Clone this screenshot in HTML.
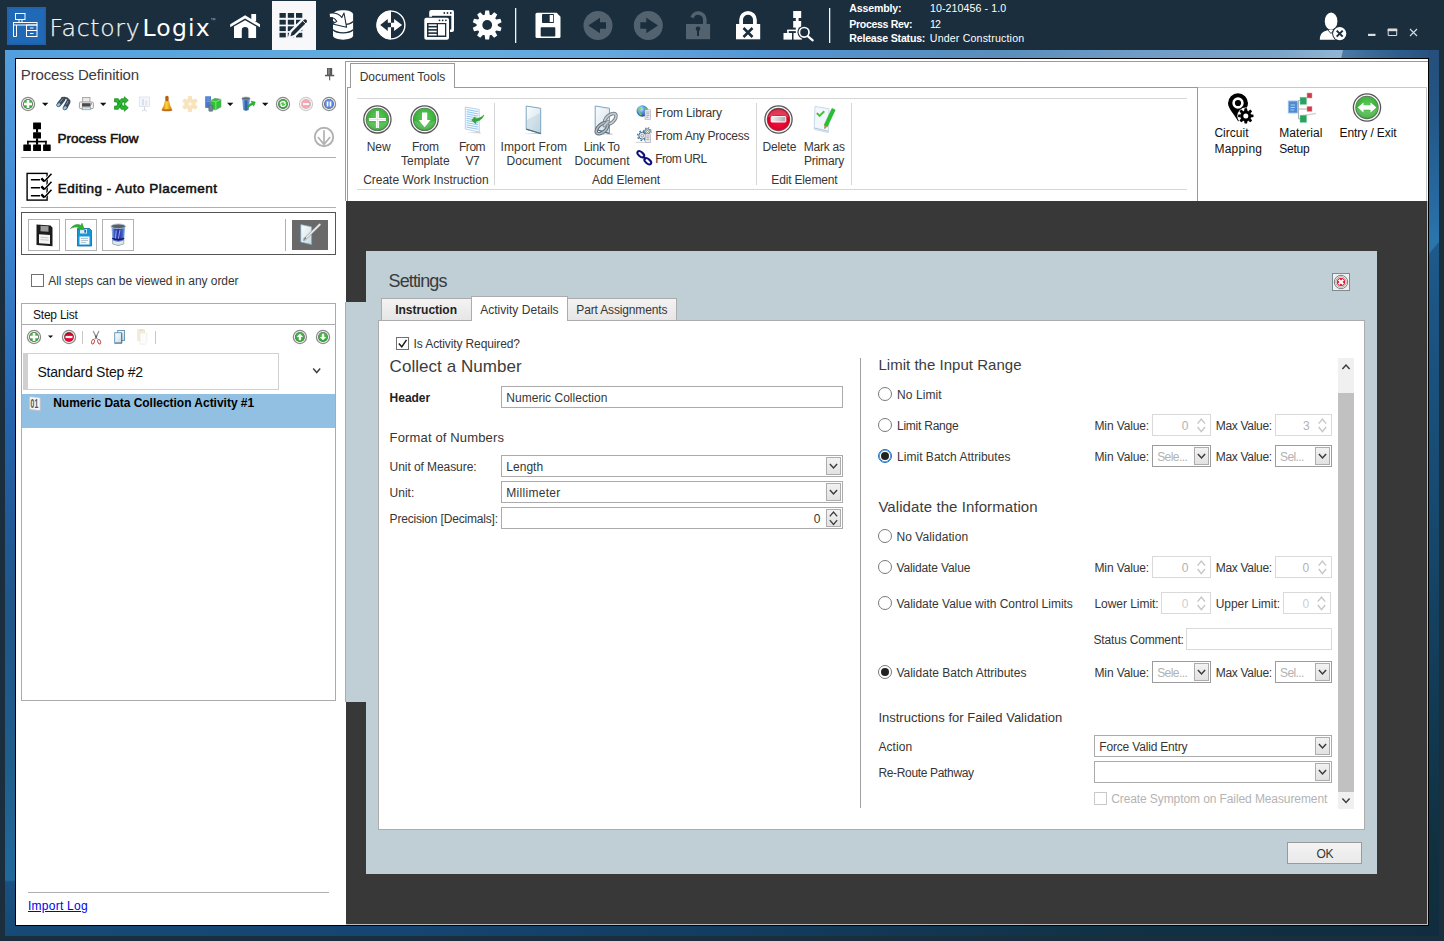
<!DOCTYPE html>
<html lang="en"><head><meta charset="utf-8"><title>FactoryLogix - Process Definition</title>
<style>
html,body{margin:0;padding:0;background:#1a2e3d;}
body{width:1444px;height:941px;overflow:hidden;font-family:"Liberation Sans",sans-serif;font-size:12px;color:#333;}
#app{position:relative;width:1444px;height:941px;overflow:hidden;background:#1a2e3d;}
#app div,#app svg,#app span{position:absolute;box-sizing:border-box;}
.t{line-height:0;white-space:nowrap;color:#363636;}
/* wallpaper strips visible around the panels */
#wl{left:5px;top:50px;width:11px;height:886px;background:linear-gradient(180deg,#549fde 0,#4791d9 110px,#408ad6 160px,#2f73bd 280px,#2565ae 360px,#215a97 470px,#205688 560px,#1f5c8b 680px,#1f5f8c 720px,#21699b 830px,#1a5082 832px,#164a76 886px);}
#wr{left:1428px;top:50px;width:11px;height:886px;background:linear-gradient(180deg,#264f7c 0,#235585 60px,#2769a0 150px,#2b75ad 191px,#1e5a8b 193px,#1b5280 300px,#174a70 450px,#133c58 620px,#10303f 800px,#0f2d3e 886px);}
#wr2{left:1428px;top:241px;width:11px;height:14px;background:#2b74ac;clip-path:polygon(0 0,100% 0,100% 1px,0 100%);}
#wt{left:5px;top:50px;width:1434px;height:9px;background:linear-gradient(90deg,#539fde 0,#5aa4de 150px,#66aedf 420px,#65a8de 600px,#5296d4 760px,#5690c6 880px,#5a8ebb 1000px,#6f9cc6 1130px,#7ba5ca 1275px,#92b6d4 1337px);}
#wt2{left:1341px;top:50px;width:98px;height:9px;background:linear-gradient(90deg,#4c7ca6 0,#3a6a96 30px,#2e5c8a 60px,#264f7c 98px);clip-path:polygon(2px 0,100% 0,100% 100%,0 100%);}
#wb{left:5px;top:925px;width:1434px;height:11px;background:linear-gradient(90deg,#164a76 0,#154572 400px,#123a5a 800px,#103245 1100px,#0f2d3e 1434px);}
#shell{left:15px;top:58px;width:1414px;height:868px;background:#fff;border:1px solid #000;}
/* title bar */
#logo{left:7px;top:7px;width:39px;height:38px;background:#1f69b7;border:2px solid #2262ab;}
#seltab{left:272px;top:1px;width:44px;height:49px;background:#f8f8fa;}
.vsep{width:1px;background:#f4f5f6;box-shadow:1px 0 0 rgba(255,255,255,.28);}
/* generic */
.ln{background:#b0b0b0;height:1px;}
.vl{background:#b0b0b0;width:1px;}
.bx{border:1px solid #ababab;background:#fff;}
.btn15{width:15px;height:18px;border:1px solid #adadad;background:linear-gradient(#f2f2f2,#e2e2e2);}
.cb{width:13px;height:13px;border:1px solid #707070;background:#fff;}
.rd{width:14px;height:14px;border:1px solid #7a7a7a;border-radius:50%;background:#fff;}
.rd.blue{border-color:#1c6fc4;box-shadow:inset 0 0 0 0.6px #1c6fc4;}
.rd.on::after{content:"";position:absolute;left:2px;top:2px;width:8px;height:8px;border-radius:50%;background:#222;}
.dis{border-color:#d9d9d9;}
.cmb{border:1px solid #9c9c9c;background:#fff;}
.ibtn{width:32px;height:32px;border:1px solid #b2b2b2;background:#fff;}

</style></head>
<body>
<div id="app">
<div id="wt"></div><div id="wt2"></div><div id="wb"></div><div id="wl"></div><div id="wr"></div><div id="wr2"></div>
<div id="shell"></div>
<!-- ===== title bar ===== -->
<div id="logo"></div>
<div id="seltab"></div>
<div class="vsep" style="left:515px;top:8px;height:35px"></div>
<div class="vsep" style="left:829px;top:8px;height:35px"></div>

<!-- ===== left panel ===== -->
<div class="ln" style="left:21px;top:157px;width:315px"></div>
<div class="ln" style="left:21px;top:207px;width:315px"></div>
<div style="left:21px;top:212px;width:315px;height:43px;border:1px solid #555;background:#fff"></div>
<div class="ibtn" style="left:28px;top:219px"></div>
<div class="ibtn" style="left:65px;top:219px"></div>
<div class="ibtn" style="left:102px;top:219px"></div>
<div class="vl" style="left:285px;top:219px;height:32px"></div>
<div style="left:292px;top:220px;width:36px;height:30px;background:#696969"></div>
<div class="cb" style="left:31px;top:274px"></div>
<!-- step list -->
<div style="left:21px;top:303px;width:315px;height:398px;border:1px solid #ababab;background:#fff"></div>
<div class="ln" style="left:21px;top:324px;width:315px;background:#ababab"></div>
<div class="vl" style="left:82px;top:331px;height:13px;background:#c8c8c8"></div>
<div class="vl" style="left:155px;top:331px;height:13px;background:#c8c8c8"></div>
<div style="left:23px;top:353px;width:256px;height:37px;border:1px solid #d0d0d0;background:#fff;border-left:5px solid #d0d0d0"></div>
<div style="left:22px;top:394px;width:313px;height:34px;background:#92c0e2"></div>
<div class="ln" style="left:28px;top:892px;width:301px"></div>

<!-- ===== right panel / ribbon ===== -->
<div style="left:345px;top:61px;width:1083px;height:140px;border:1px solid #9a9a9a;border-right:0;border-bottom:0;background:#fff"></div>
<div style="left:347px;top:87px;width:851px;height:114px;border:1px solid #9a9a9a;border-bottom:0;background:#fff"></div>
<div class="ln" style="left:1198px;top:87px;width:229px;background:#c8c8c8"></div>
<div class="vl" style="left:1426px;top:87px;height:114px;background:#c8c8c8"></div>
<div style="left:350px;top:63px;width:105px;height:25px;border:1px solid #9a9a9a;border-bottom:0;background:#fff"></div>
<div class="ln" style="left:357px;top:98px;width:830px;background:#d6d6d6"></div>
<div class="ln" style="left:357px;top:189px;width:830px;background:#d6d6d6"></div>
<div class="vl" style="left:494px;top:103px;height:82px;background:#d6d6d6"></div>
<div class="vl" style="left:756px;top:103px;height:82px;background:#d6d6d6"></div>
<div class="vl" style="left:851px;top:103px;height:82px;background:#d6d6d6"></div>
<!-- dark work area -->
<div style="left:346px;top:201px;width:1082px;height:724px;background:#383838"></div>
<div class="vl" style="left:1427px;top:201px;height:724px;background:#bdbdbd"></div>
<div class="ln" style="left:346px;top:924px;width:1082px;background:#bdbdbd"></div>
<div style="left:345px;top:302px;width:22px;height:400px;background:#c0ced6;border-left:1px solid #a9a9a9"></div>

<!-- ===== settings dialog ===== -->
<div id="dlg" style="left:366px;top:251px;width:1011px;height:623px;background:#c0ced6"></div>
<div style="left:1332px;top:273px;width:18px;height:18px;border:1px solid #7b8a93;background:#f1f1f1"></div>
<!-- tabs -->
<div style="left:381px;top:298px;width:91px;height:23px;border:1px solid #acacac;background:linear-gradient(#f3f3f3,#e6e6e6)"></div>
<div style="left:567px;top:298px;width:110px;height:23px;border:1px solid #acacac;background:linear-gradient(#f3f3f3,#e6e6e6)"></div>
<div style="left:378px;top:320px;width:987px;height:510px;border:1px solid #acacac;background:#fff"></div>
<div style="left:471px;top:296px;width:97px;height:25px;border:1px solid #acacac;border-bottom:0;background:#fff"></div>
<!-- left column -->
<div class="cb" style="left:396px;top:337px"></div>
<div class="bx" style="left:501px;top:386px;width:342px;height:22px"></div>
<div class="bx" style="left:501px;top:455px;width:342px;height:22px"></div>
<div class="btn15" style="left:826px;top:457px"></div>
<div class="bx" style="left:501px;top:481px;width:342px;height:22px"></div>
<div class="btn15" style="left:826px;top:483px"></div>
<div class="bx" style="left:501px;top:507px;width:342px;height:22px"></div>
<div class="btn15" style="left:826px;top:509px"></div>
<div class="vl" style="left:860px;top:358px;height:450px;background:#a0a0a0"></div>
<!-- scrollbar -->
<div style="left:1338px;top:358px;width:16px;height:451px;background:#f0f0f0"></div>
<div style="left:1338px;top:393px;width:16px;height:399px;background:#c1c1c1"></div>
<!-- radios -->
<div class="rd" style="left:878px;top:387px"></div>
<div class="rd" style="left:878px;top:418px"></div>
<div class="rd on blue" style="left:878px;top:449px"></div>
<div class="rd" style="left:878px;top:529px"></div>
<div class="rd" style="left:878px;top:560px"></div>
<div class="rd" style="left:878px;top:596px"></div>
<div class="rd on" style="left:878px;top:665px"></div>
<!-- limit range row -->
<div class="bx dis" style="left:1152px;top:414px;width:59px;height:22px"></div>
<div class="bx dis" style="left:1275px;top:414px;width:57px;height:22px"></div>
<!-- limit batch row -->
<div class="cmb" style="left:1152px;top:445px;width:59px;height:22px"></div>
<div class="btn15" style="left:1194px;top:447px"></div>
<div class="cmb" style="left:1275px;top:445px;width:57px;height:22px"></div>
<div class="btn15" style="left:1315px;top:447px"></div>
<!-- validate value row -->
<div class="bx dis" style="left:1152px;top:556px;width:59px;height:22px"></div>
<div class="bx dis" style="left:1275px;top:556px;width:57px;height:22px"></div>
<!-- control limits row -->
<div class="bx dis" style="left:1161px;top:592px;width:50px;height:22px"></div>
<div class="bx dis" style="left:1283px;top:592px;width:48px;height:22px"></div>
<!-- status comment -->
<div class="bx dis" style="left:1186px;top:628px;width:146px;height:22px"></div>
<!-- validate batch row -->
<div class="cmb" style="left:1152px;top:661px;width:59px;height:22px"></div>
<div class="btn15" style="left:1194px;top:663px"></div>
<div class="cmb" style="left:1275px;top:661px;width:57px;height:22px"></div>
<div class="btn15" style="left:1315px;top:663px"></div>
<!-- action / re-route -->
<div class="bx" style="left:1094px;top:735px;width:238px;height:22px"></div>
<div class="btn15" style="left:1315px;top:737px"></div>
<div class="bx" style="left:1094px;top:761px;width:238px;height:22px"></div>
<div class="btn15" style="left:1315px;top:763px"></div>
<div class="cb" style="left:1094px;top:792px;border-color:#c9c9c9"></div>
<!-- OK -->
<div style="left:1287px;top:842px;width:75px;height:22px;border:1px solid #9a9a9a;background:linear-gradient(#f4f4f4,#e9e9e9)"></div>

<!-- ===== dialog glyphs ===== -->
<svg style="left:366px;top:251px" width="1011" height="623" viewBox="366 251 1011 623">
 <defs>
  <path id="chv" d="M-3.600 -1.900L0 1.900L3.600 -1.900" fill="none" stroke="#3c3c3c" stroke-width="1.500"/>
  <g id="spin"><path d="M-3.700 -1.900L0 -6.200L3.700 -1.900M-3.700 1.900L0 6.200L3.700 1.900" fill="none" stroke="#3c3c3c" stroke-width="1.300"/></g>
  <g id="spind"><path d="M-3.700 -1.700L0 -6.300L3.700 -1.700M-3.700 1.700L0 6.300L3.700 1.700" fill="none" stroke="#c6c6c6" stroke-width="1.400"/></g>
 </defs>
 <!-- close -->
 <g transform="translate(1341 282)"><circle r="6.700" fill="#f4f4f4" stroke="#6f6f6f" stroke-width="0.900"/><circle r="5.200" fill="none" stroke="#8d8d8d" stroke-width="0.700"/><circle r="4.100" fill="#e8102c"/><path d="M-2.300 -2.300L2.300 2.300M2.300 -2.300L-2.300 2.300" stroke="#fff" stroke-width="2.100"/></g>
 <!-- check mark -->
 <path d="M398.800 343.500L401.800 346.800L406.500 339.800" fill="none" stroke="#1a1a1a" stroke-width="1.500"/>
 <!-- combo chevrons left column -->
 <use href="#chv" x="833.500" y="466"/>
 <use href="#chv" x="833.500" y="492"/>
 <use href="#spin" x="833.500" y="518.200"/>
 <!-- scrollbar arrows -->
 <use href="#chv" x="1346" y="367" transform="rotate(180 1346 367)"/>
 <use href="#chv" x="1346" y="800.500"/>
 <!-- disabled spinners -->
 <use href="#spind" x="1201.300" y="425.300"/><use href="#spind" x="1322.400" y="425.300"/>
 <use href="#spind" x="1201.300" y="567.300"/><use href="#spind" x="1322.400" y="567.300"/>
 <use href="#spind" x="1201.300" y="603.300"/><use href="#spind" x="1321.500" y="603.300"/>
 <!-- combo chevrons right column -->
 <use href="#chv" x="1201.500" y="456"/><use href="#chv" x="1322.500" y="456"/>
 <use href="#chv" x="1201.500" y="672"/><use href="#chv" x="1322.500" y="672"/>
 <use href="#chv" x="1322.500" y="746"/><use href="#chv" x="1322.500" y="772"/>
</svg>
<!-- ===== shared defs + left panel icons ===== -->
<svg style="left:0;top:59px" width="346" height="866" viewBox="0 59 346 866">
 <defs>
  <radialGradient id="gGreen" cx="50%" cy="40%" r="68%"><stop offset="0" stop-color="#5ccb58"/><stop offset="0.7" stop-color="#3aae3a"/><stop offset="1" stop-color="#1f8a24"/></radialGradient>
  <radialGradient id="gRed" cx="50%" cy="62%" r="62%"><stop offset="0" stop-color="#f2103c"/><stop offset="0.7" stop-color="#de0029"/><stop offset="1" stop-color="#b4001c"/></radialGradient>
  <radialGradient id="gBlue" cx="50%" cy="40%" r="70%"><stop offset="0" stop-color="#74a0f4"/><stop offset="1" stop-color="#4573dc"/></radialGradient>
  <linearGradient id="gDoc" x1="0" y1="0" x2="1" y2="1"><stop offset="0" stop-color="#fbfdfe"/><stop offset="0.5" stop-color="#e4eef4"/><stop offset="1" stop-color="#c3d7e2"/></linearGradient>
  <linearGradient id="gBell" x1="0" y1="0" x2="1" y2="0"><stop offset="0" stop-color="#c86a00"/><stop offset="0.45" stop-color="#ffd23c"/><stop offset="1" stop-color="#d46f00"/></linearGradient>
  <linearGradient id="gBin2" x1="0" y1="0" x2="1" y2="0"><stop offset="0" stop-color="#b4d4ee"/><stop offset="0.22" stop-color="#3a55c4"/><stop offset="0.55" stop-color="#2230a4"/><stop offset="0.82" stop-color="#4468cc"/><stop offset="1" stop-color="#a9cbe8"/></linearGradient>
  <linearGradient id="gBin" x1="0" y1="0" x2="1" y2="0"><stop offset="0" stop-color="#8fc4e8"/><stop offset="0.5" stop-color="#2a55a8"/><stop offset="1" stop-color="#7fb4dc"/></linearGradient>
  <g id="orb7"><circle r="6.600" fill="#f6f6f6" stroke="#8a8a8a" stroke-width="1.200"/><circle r="5" fill="#707070"/></g>
  <g id="orb14"><circle r="13.600" fill="#fcfcfc" stroke="#555" stroke-width="1.300"/><circle r="11.700" fill="#6a6a6a"/></g>
  <path id="dd" d="M0 0H6.400L3.200 3.300Z" fill="#111"/>
 </defs>
 <!-- pin -->
 <g fill="#595959"><rect x="327" y="68" width="5.200" height="7"/><rect x="328.300" y="68.600" width="1.200" height="6" fill="#9a9a9a"/><rect x="325" y="74.800" width="9.200" height="1.500"/><rect x="329.100" y="76" width="1.100" height="4.300"/></g>
 <!-- toolbar row y=104 -->
 <g transform="translate(28 104)"><use href="#orb7"/><circle r="4.500" fill="url(#gGreen)"/><path d="M-4 0H4M0 -4V4" stroke="#fff" stroke-width="2.500"/></g>
 <use href="#dd" x="42" y="102.800"/>
 <!-- binoculars -->
 <g fill="none" stroke-linecap="round">
  <path d="M59 104.300L63.200 99.200M65.300 107.500L68.200 102" stroke="#3d4a59" stroke-width="4.600"/>
  <path d="M62 98.300Q66.500 96.600 69.300 100.600" stroke="#3d4a59" stroke-width="2"/>
  <path d="M60.500 101.500L62.700 98.900M66.500 104.200L68 101.400" stroke="#8f9cab" stroke-width="0.900"/>
  <ellipse cx="58.700" cy="104.700" rx="2.300" ry="1.700" fill="#86c8f0" stroke="#3d4a59" stroke-width="0.600" transform="rotate(-40 58.700 104.700)"/>
  <ellipse cx="65" cy="107.900" rx="2.300" ry="1.700" fill="#86c8f0" stroke="#3d4a59" stroke-width="0.600" transform="rotate(-40 65 107.900)"/>
 </g>
 <!-- printer -->
 <g>
  <rect x="82.700" y="97.600" width="7.300" height="5" fill="#e9e9e9" stroke="#8c8c8c" stroke-width="0.700"/>
  <rect x="79.400" y="102" width="14" height="6.600" rx="1.200" fill="#f4f4f4" stroke="#8a8a8a" stroke-width="0.800"/>
  <rect x="82" y="103.200" width="8.600" height="3.400" fill="#4a4a4a"/>
  <rect x="82.200" y="107" width="8.400" height="2.800" fill="#cfeaf6" stroke="#8a8a8a" stroke-width="0.600"/>
  <rect x="91" y="103.400" width="1" height="1" fill="#2f5fff"/>
 </g>
 <use href="#dd" x="100" y="102.800"/>
 <!-- green shuffle -->
 <g fill="#27b62e" stroke="#14881b" stroke-width="0.700" stroke-linejoin="round">
  <path d="M114.500 98.700H118.300L123 106.100H124.300V104.100L128.300 107.700L124.300 111.300V109.300H121.300L116.600 101.900H114.500Z"/>
  <path d="M114.500 109.300H118.300L123 101.900H124.300V103.900L128.300 100.300L124.300 96.700V98.700H121.300L116.600 106.100H114.500Z"/>
 </g>
 <!-- presentation (disabled) -->
 <g opacity="0.550">
  <rect x="139.300" y="97" width="10.300" height="9.600" fill="#eaf2fb" stroke="#a9c3e6" stroke-width="0.700"/>
  <rect x="142" y="99" width="2" height="6.500" fill="#b9c8d8"/><rect x="145.200" y="100.500" width="2" height="5" fill="#c9d2dc"/>
  <path d="M144.500 106.600V110.500M142 111.300L144.500 109.500L147 111.300" stroke="#a8a8a8" stroke-width="0.800" fill="none"/>
 </g>
 <!-- bell -->
 <g>
  <rect x="165.300" y="95.700" width="3.300" height="6.300" rx="1.500" fill="#b5610c"/>
  <path d="M164.700 101.300C164.200 105 163.300 107.200 161.600 109.600Q167 111.800 172.400 109.600C170.700 107.200 169.800 105 169.300 101.300Z" fill="url(#gBell)"/>
  <ellipse cx="167" cy="110.200" rx="5.300" ry="1" fill="#a85200" opacity="0.800"/>
 </g>
 <!-- gear (disabled) -->
 <g transform="translate(190 104)" fill="#f7e4bd">
  <circle r="5.700"/>
  <g id="gt6"><rect x="-2" y="-8" width="4" height="4" rx="0.800"/></g>
  <use href="#gt6" transform="rotate(60)"/><use href="#gt6" transform="rotate(120)"/><use href="#gt6" transform="rotate(180)"/><use href="#gt6" transform="rotate(240)"/><use href="#gt6" transform="rotate(300)"/>
  <circle r="1.800" fill="#fdf6e6"/>
 </g>
 <!-- green box with server -->
 <g>
  <rect x="205.200" y="96.300" width="5.800" height="11.600" fill="#4a76cc"/>
  <path d="M206.300 98H210M206.300 99.800H210M206.300 101.600H210" stroke="#93b3ee" stroke-width="0.600"/>
  <path d="M210.500 100.500L215 98.300L221 99.300V107L215.500 110L210.500 108.500Z" fill="#2fc237" stroke="#7f8f86" stroke-width="0.600"/>
  <path d="M210.500 100.500L215.800 101.800L221 99.300M215.800 101.800V110" stroke="#baf0bd" stroke-width="0.600" fill="none"/>
  <rect x="208.800" y="105.300" width="4" height="6" rx="0.800" fill="#6f8796" stroke="#4b5b66" stroke-width="0.500"/>
 </g>
 <use href="#dd" x="227" y="102.800"/>
 <!-- bin with arrow -->
 <g>
  <path d="M242 98.500L243.200 110Q246 111.600 248.800 110L250 98.500Z" fill="url(#gBin)"/>
  <ellipse cx="246" cy="98.500" rx="4.100" ry="1.500" fill="#5e6a74" stroke="#9aa6ae" stroke-width="0.600"/>
  <path d="M246.500 108.500C248 105 250 103.500 252 103L251 101L255.300 102L253.800 106.300L253 104.700C251.200 105.200 249.500 106.500 246.500 108.500Z" fill="#2bb52f" stroke="#1c8a20" stroke-width="0.400"/>
 </g>
 <use href="#dd" x="262" y="102.800"/>
 <g transform="translate(283 104)"><use href="#orb7"/><circle r="4.500" fill="url(#gGreen)"/><path d="M-2.800 -0.300C-2 -2.800 1 -3 2.200 -1.500M2.800 0.300C2 2.800 -1 3 -2.200 1.500" stroke="#fff" stroke-width="1.200" fill="none"/><path d="M1.300 -3L3.300 -0.600L0.700 -0.300ZM-1.300 3L-3.300 0.600L-0.700 0.300Z" fill="#fff"/></g>
 <g transform="translate(306 104)" opacity="0.420"><use href="#orb7"/><circle r="4.500" fill="#e8324a"/><rect x="-3" y="-0.900" width="6" height="1.800" fill="#fff"/></g>
 <g transform="translate(329 104)"><use href="#orb7"/><circle r="4.500" fill="url(#gBlue)"/><rect x="-2.300" y="-2.500" width="1.600" height="5" fill="#fff"/><rect x="0.700" y="-2.500" width="1.600" height="5" fill="#fff"/></g>
 <!-- process flow icon -->
 <g fill="#000">
  <rect x="33.100" y="122.600" width="7.900" height="6.700" rx="0.500"/><rect x="36" y="129" width="2.100" height="3.500"/>
  <rect x="33.100" y="132.200" width="7.900" height="6.400" rx="0.500"/><rect x="36" y="138.300" width="2.100" height="6.500"/>
  <rect x="27.100" y="140.800" width="19.600" height="1.600"/>
  <rect x="27.100" y="140.800" width="1.600" height="4"/><rect x="45.100" y="140.800" width="1.600" height="4"/>
  <rect x="23.300" y="144.600" width="7.600" height="6.500" rx="0.500"/><rect x="33.100" y="144.600" width="7.900" height="6.500" rx="0.500"/><rect x="43.100" y="144.600" width="7.600" height="6.500" rx="0.500"/>
 </g>
 <!-- circle down arrow -->
 <g fill="none" stroke="#b2b2b2" stroke-width="1.900"><circle cx="324" cy="137" r="9.200"/><path d="M324 130.300V144M317.800 137L324 144.400L330.200 137" stroke-width="1.700"/></g>
 <!-- checklist icon -->
 <g fill="none" stroke="#000">
  <rect x="27.100" y="173.400" width="20" height="26.700" stroke-width="1.400" fill="#fff"/>
  <path d="M30.900 179.700H40M30.900 187.700H40M30.900 195.700H40" stroke-width="1.400"/>
  <g stroke="#fff" stroke-width="2.600"><path d="M44.300 181.200L51.300 173.700M44.300 189.200L51.300 181.700M44.300 197.200L51.300 189.700"/></g>
  <path d="M41.300 178.300L44.300 181.300M41.300 186.300L44.300 189.300M41.300 194.300L44.300 197.300" stroke-width="2.400"/>
  <path d="M44.300 181.600L51.500 173.700M44.300 189.600L51.500 181.700M44.300 197.600L51.500 189.700" stroke-width="1.500"/>
 </g>
 <!-- editing box buttons -->
 <g>
  <path d="M36.500 225H50.500L52.500 227V245.500H36.500Z" fill="#1c1c1c" transform="skewY(4) translate(0 -3)"/>
  <rect x="39" y="234.500" width="11" height="9" fill="#f4f4f4" transform="skewY(4) translate(0 -3)"/>
  <rect x="40.500" y="225.800" width="8" height="5.500" fill="#9a9a9a" transform="skewY(4) translate(0 -3)"/>
  <path d="M40.500 237.500H48.500M40.500 239.800H48.500" stroke="#b5b5b5" stroke-width="0.700" transform="skewY(4) translate(0 -3)"/>
 </g>
 <g>
  <path d="M77.500 228.500H89.500L91.500 230.500V246H77.500Z" fill="#1797d8" stroke="#0c66a6" stroke-width="0.800"/>
  <rect x="80" y="229" width="7" height="4.500" fill="#d9eefb"/><rect x="84.300" y="229.700" width="1.800" height="3" fill="#1c6fb0"/>
  <rect x="79.500" y="236.500" width="10" height="8" fill="#f5f9fc"/>
  <path d="M81 238.500H88M81 240.500H88M81 242.500H86" stroke="#9ab" stroke-width="0.700"/>
  <path d="M70.500 228.500C73.500 224.500 78 223.500 81 225.500L82 223.200L84.300 229.500L77.600 229.800L79.200 227.700C76.500 226.500 73.500 227 70.500 228.500Z" fill="#2fb335" stroke="#1b8a22" stroke-width="0.500"/>
 </g>
 <g>
  <path d="M111.300 226.500L112.700 244Q118.200 246.800 123.700 244L125.300 226.500Z" fill="url(#gBin2)"/>
  <path d="M112.400 240.300Q118.200 242.600 124 240.300L123.700 244Q118.200 246.800 112.700 244Z" fill="#dfe8ef" stroke="#8a98a4" stroke-width="0.600"/>
  <path d="M116.300 230.500L115.300 239M120 229.800L118.300 239" stroke="#aebdf0" stroke-width="1" opacity="0.850"/>
  <path d="M112.200 238.300Q118.200 240.600 124.200 238.300" stroke="#111c6e" stroke-width="1.300" fill="none"/>
  <ellipse cx="118.300" cy="226.300" rx="7.200" ry="2.300" fill="#55616b" stroke="#b4c0c8" stroke-width="0.900"/>
 </g>
 <g>
  <path d="M300.800 224.500L311.600 226.800V244.600L300.800 242Z" fill="url(#gDoc)" stroke="#7fa6c0" stroke-width="0.700"/>
  <path d="M304.200 239.800L319.700 224.600" stroke="#9a9a9a" stroke-width="2.600" stroke-linecap="round"/><path d="M304.200 239.800L319.700 224.600" stroke="#ececec" stroke-width="1.500" stroke-linecap="round"/>
  <path d="M304 239.500L306 237.500" stroke="#777" stroke-width="1.300"/>
 </g>
 <!-- check in "all steps" none -->
 <!-- step list toolbar -->
 <g transform="translate(34 337)"><use href="#orb7"/><circle r="4.500" fill="url(#gGreen)"/><path d="M-4 0H4M0 -4V4" stroke="#fff" stroke-width="2.500"/></g>
 <use href="#dd" x="48" y="335.500" transform="translate(9.600 67) scale(0.800)"/>
 <g transform="translate(69 337)"><use href="#orb7"/><circle r="4.500" fill="url(#gRed)"/><rect x="-3.500" y="-1.100" width="7" height="2.200" fill="#f4f4f4"/></g>
 <!-- scissors -->
 <g fill="none">
  <path d="M93.200 331L97.300 339.300M99 331L94.900 339.300" stroke="#8d9397" stroke-width="1.200"/>
  <path d="M95.200 335.500L96.100 337.500L97 335.500" stroke="#4d5358" stroke-width="1"/>
  <ellipse cx="93" cy="341.700" rx="1.400" ry="2.300" stroke="#c4473f" stroke-width="0.900" transform="rotate(24 93 341.700)"/>
  <ellipse cx="99.200" cy="341.700" rx="1.400" ry="2.300" stroke="#c4473f" stroke-width="0.900" transform="rotate(-24 99.200 341.700)"/>
 </g>
 <!-- copy -->
 <g stroke-width="0.900"><rect x="117.700" y="330.500" width="6.800" height="10" fill="url(#gDoc)" stroke="#5f8ead"/><rect x="114.700" y="332.700" width="6.800" height="10.200" fill="url(#gDoc)" stroke="#5f8ead"/><path d="M114.500 343.300H121.900V333" fill="none" stroke="#4a6578" stroke-width="0.700"/></g>
 <!-- paste (disabled) -->
 <g opacity="0.500"><rect x="137.800" y="329.800" width="6.800" height="10.800" fill="#f0d9a6" stroke="#dcc084" stroke-width="0.600"/><rect x="139.700" y="329.300" width="3" height="1.800" fill="#bdbdbd"/><path d="M140 333H146.800V342.500L145 344.200H140Z" fill="#fafafa" stroke="#d4d4d4" stroke-width="0.600"/></g>
 <g transform="translate(299.900 337)"><use href="#orb7"/><circle r="4.500" fill="url(#gGreen)"/><path d="M0 -3.300L3.200 0H1.100V3.200H-1.100V0H-3.200Z" fill="#fff"/></g>
 <g transform="translate(323 337)"><use href="#orb7"/><circle r="4.500" fill="url(#gGreen)"/><path d="M0 3.300L3.200 0H1.100V-3.200H-1.100V0H-3.200Z" fill="#fff"/></g>
 <path d="M313.200 368.600L316.700 372.600L320.200 368.600" fill="none" stroke="#444" stroke-width="1.500"/>
 <!-- 01 icon -->
 <g><path d="M29.800 396.700L40.300 397.900V410.800L29.800 409.600Z" fill="#f7f7f7" stroke="#c9d3da" stroke-width="0.500"/>
  <path d="M40.300 397.900V410.800L29.800 409.600" fill="none" stroke="#b4bec6" stroke-width="0.800"/>
  <text transform="translate(30.600 408.300) scale(0.530 1)" font-family="'Liberation Sans',sans-serif" font-size="13" font-weight="bold" fill="#555">01</text></g>
</svg>
<!-- ===== ribbon icons ===== -->
<svg style="left:346px;top:88px" width="1082" height="113" viewBox="346 88 1082 113">
 <defs><radialGradient id="gGlobe" cx="38%" cy="32%" r="75%"><stop offset="0" stop-color="#cdeafc"/><stop offset="0.45" stop-color="#4a9be2"/><stop offset="1" stop-color="#1a3f96"/></radialGradient><linearGradient id="gBar" x1="0" y1="0" x2="1" y2="0"><stop offset="0" stop-color="#f2f2f2"/><stop offset="1" stop-color="#a9a9a9"/></linearGradient></defs>
 <g transform="translate(377.400 119.400)"><use href="#orb14"/><circle r="11.100" fill="url(#gGreen)"/><path d="M-11 1A11.100 11.100 0 0 0 11 1Q0 6 -11 1Z" fill="#fff" opacity="0.160"/><path d="M-8.500 0H8.500M0 -8.500V8.500" stroke="#fff" stroke-width="3"/><path d="M-8.500 0H8.500M0 -8.500V8.500" stroke="#cfcfcf" stroke-width="0.600"/></g>
 <g transform="translate(424.600 119.400)"><use href="#orb14"/><circle r="11.100" fill="url(#gGreen)"/><path d="M-11 1A11.100 11.100 0 0 0 11 1Q0 6 -11 1Z" fill="#fff" opacity="0.160"/><path d="M-2.600 -7H2.600V0.500H6L0 7.800L-6 0.500H-2.600Z" fill="#fff"/></g>
 <!-- from v7 doc -->
 <g>
  <path d="M466 132.600L481 133.400L480 132Z" fill="#777" opacity="0.350"/><path d="M465.300 107L479.200 109.500V132L465.300 129Z" fill="#f6fbff" stroke="#a5c8e8" stroke-width="0.800"/>
  <g stroke="#8cbfec" stroke-width="0.900"><path d="M466.500 109.500L478 111.600M466.500 111.700L478 113.800M466.500 113.900L478 116M466.500 116.100L478 118.200M466.500 118.300L478 120.400M466.500 120.500L478 122.600M466.500 122.700L478 124.800M466.500 124.900L478 127M466.500 127.100L478 129.200"/></g>
  <path d="M483.800 115C482.500 119.500 478.500 121.300 475.500 121.500L476 123.800L471.700 120.300L475 116.700L475.300 118.800C478.500 118.800 481.500 117.500 483.800 115Z" fill="#2cab33" stroke="#1f8a27" stroke-width="0.500"/>
 </g>
 <!-- import doc -->
 <g>
  <path d="M523 133.300L541.500 134.300L541 133.200Z" fill="#666" opacity="0.500"/>
  <path d="M526.200 106L540.700 108.300V133.500L526.200 129.200Z" fill="url(#gDoc)" stroke="#6f9dba" stroke-width="0.900"/>
  <path d="M527 120L540 113V132.500L527 128.500Z" fill="#b9d0dc" opacity="0.450"/><path d="M526.200 129.200L540.700 133.500" stroke="#4d6b7e" stroke-width="1.200"/>
 </g>
 <!-- link doc -->
 <g>
  <path d="M592 133.800L613 134.800L612 133.500Z" fill="#666" opacity="0.400"/>
  <path d="M595.200 106L609.500 108.300V133.500L595.200 129.200Z" fill="url(#gDoc)" stroke="#6f9dba" stroke-width="0.900"/>
  <path d="M595.200 129.200L609.500 133.500" stroke="#4d6b7e" stroke-width="1.200"/>
  <g fill="none" stroke-linecap="round">
   <ellipse cx="610.300" cy="119" rx="7" ry="3.800" transform="rotate(-42 610.300 119)" stroke="#7a848c" stroke-width="3.600"/>
   <ellipse cx="610.300" cy="119" rx="7" ry="3.800" transform="rotate(-42 610.300 119)" stroke="#c9d0d6" stroke-width="1.500"/>
   <ellipse cx="602" cy="128.300" rx="7" ry="3.800" transform="rotate(-42 602 128.300)" stroke="#656f77" stroke-width="3.600"/>
   <ellipse cx="602" cy="128.300" rx="7" ry="3.800" transform="rotate(-42 602 128.300)" stroke="#b4bdc4" stroke-width="1.500"/>
   <path d="M604.300 125.800L608.200 121.500" stroke="#8a949c" stroke-width="3.400"/>
   <path d="M604.300 125.800L608.200 121.500" stroke="#ccd3d8" stroke-width="1.300"/>
  </g>
 </g>
 <!-- small: globe -->
 <g>
  <circle cx="642.300" cy="111" r="5.800" fill="url(#gGlobe)"/>
  <path d="M638.600 108.500Q640 107.300 641.300 108Q641 109.800 639.800 110.600Q640 112.800 642 114.800Q640.800 115.800 639.300 114.300Q637.700 111.500 638.600 108.500Z" fill="#8fc83c" opacity="0.850"/>
  <path d="M644.500 106.500Q646.500 107 647.300 109L645 109.500Z" fill="#7cc040" opacity="0.800"/>
  <rect x="645" y="109.800" width="5.600" height="9.600" fill="#eeeef2" stroke="#a4a4b0" stroke-width="0.600"/>
  <path d="M646.200 112H649.400M646.200 113.800H649.400M646.200 115.600H649.400M646.200 117.400H648.500" stroke="#8e8e9c" stroke-width="0.700"/>
 </g>
 <!-- small: gears + doc -->
 <g>
  <path d="M636 142.300H651" stroke="#b9b9b9" stroke-width="0.700"/>
  <g fill="none" stroke="#2b5c84">
   <circle cx="642.300" cy="135.700" r="4.700" stroke-width="1.300" stroke-dasharray="1.700 1.990" opacity="0.850"/><circle cx="642.300" cy="135.700" r="3.500" stroke-width="0.900" fill="#e3edf3"/><circle cx="642.300" cy="135.700" r="1.300" stroke-width="0.700" stroke="#777" fill="#fff"/>
   <circle cx="647.500" cy="131.400" r="3.600" stroke-width="1.100" stroke-dasharray="1.400 1.430" opacity="0.850"/><circle cx="647.500" cy="131.400" r="2.600" stroke-width="0.800" fill="#f1f0d6"/><circle cx="647.500" cy="131.400" r="1" stroke-width="0.600" stroke="#555" fill="#fff"/>
  </g>
  <rect x="645.200" y="134" width="5.400" height="8.300" fill="#eeeef2" stroke="#a4a4b0" stroke-width="0.600"/>
  <path d="M646.300 136H649.400M646.300 137.800H649.400M646.300 139.600H649.400" stroke="#8e8e9c" stroke-width="0.700"/>
 </g>
 <!-- small: chain -->
 <g fill="none" stroke="#10107a" stroke-width="2" stroke-linecap="round">
  <ellipse cx="640.800" cy="154.300" rx="4" ry="2.200" transform="rotate(40 640.800 154.300)"/>
  <ellipse cx="647.800" cy="161.300" rx="4" ry="2.200" transform="rotate(40 647.800 161.300)"/>
  <path d="M643.300 156.800L645.300 158.800" stroke-width="2"/>
 </g>
 <!-- delete orb -->
 <g transform="translate(778.500 119.500)"><use href="#orb14"/><circle r="11.100" fill="url(#gRed)"/><path d="M-10.500 -2A10.800 10.800 0 0 1 10.500 -2Q0 -6.500 -10.500 -2Z" fill="#fff" opacity="0.220"/><rect x="-7.300" y="-2.900" width="14.600" height="5.400" rx="0.600" fill="url(#gBar)" stroke="#fff" stroke-width="1"/></g>
 <!-- mark as primary -->
 <g>
  <path d="M815 106.400L829 108.800L828.300 132.600L814.200 129.300Z" fill="#f1f7fc" stroke="#bcd2e6" stroke-width="0.800"/>
  <path d="M814.400 128L828.200 131.200" stroke="#9fb8d0" stroke-width="0.800"/>
  <path d="M816.800 113L819.600 115.800L824.300 111.200" fill="none" stroke="#4cc234" stroke-width="1.900"/>
  <path d="M832 108.400L835.200 109.900L827.300 126.700L824.100 125.200Z" fill="#25c22e" stroke="#1b9a25" stroke-width="0.500"/>
  <path d="M824.100 125.200L827.300 126.700L824.700 128.800Z" fill="#c98a3c"/><path d="M824.400 127.500L824.700 128.800L825.500 128.100Z" fill="#333"/>
 </g>
 <!-- circuit mapping -->
 <g>
  <path d="M1238 93.300A10 10 0 0 1 1248 103.300C1248 108.500 1242 114.500 1238.300 121.600C1234.500 114.500 1228 108.500 1228 103.300A10 10 0 0 1 1238 93.300Z" fill="#000"/>
  <circle cx="1238" cy="103" r="5.700" fill="#fff"/><circle cx="1238" cy="103" r="3.100" fill="#000"/>
  <g transform="translate(1245.800 115.900)">
   <circle r="8.500" fill="#fff"/>
   <circle r="5.400" fill="#000"/>
   <g id="ct"><path d="M-1.700 -5L-1.200 -7.700H1.200L1.700 -5Z" fill="#000"/></g>
   <use href="#ct" transform="rotate(45)"/><use href="#ct" transform="rotate(90)"/><use href="#ct" transform="rotate(135)"/><use href="#ct" transform="rotate(180)"/><use href="#ct" transform="rotate(225)"/><use href="#ct" transform="rotate(270)"/><use href="#ct" transform="rotate(315)"/>
   <circle r="2.500" fill="#fff"/>
  </g>
 </g>
 <!-- material setup -->
 <g>
  <path d="M1302 100.500H1298.500V118.800H1302M1298.500 109H1308" fill="none" stroke="#a9b0b6" stroke-width="1"/>
  <path d="M1300 116L1316 113.500" stroke="#d4d4d4" stroke-width="1.600"/>
  <rect x="1288.300" y="101" width="9.200" height="12" fill="#4f8ad4" stroke="#9cc0ec" stroke-width="0.900"/>
  <path d="M1290.500 105H1295M1290.500 107.500H1295M1290.500 110H1294" stroke="#bcd6f4" stroke-width="0.900"/>
  <rect x="1300" y="97.200" width="6.600" height="7.200" fill="#27a361" stroke="#7fd0a4" stroke-width="0.500"/>
  <rect x="1307" y="93" width="5" height="5" fill="#cf3a48" stroke="#e89aa2" stroke-width="0.500"/>
  <rect x="1307" y="106.400" width="5" height="5" fill="#cf3a48" stroke="#e89aa2" stroke-width="0.500"/>
  <rect x="1300" y="115.200" width="6.600" height="7.200" fill="#27a361" stroke="#7fd0a4" stroke-width="0.500"/>
 </g>
 <!-- entry / exit -->
 <g transform="translate(1367 107.500)"><use href="#orb14"/><circle r="11.100" fill="url(#gGreen)"/><path d="M-11 1A11.100 11.100 0 0 0 11 1Q0 6 -11 1Z" fill="#fff" opacity="0.160"/><path d="M-9.500 0L-3.500 -5V-2.200H3.500V-5L9.500 0L3.500 5V2.200H-3.500V5Z" fill="#fff"/></g>
</svg>
<!-- ===== title bar icons ===== -->
<svg style="left:0;top:0" width="1444" height="50" viewBox="0 0 1444 50">
 <!-- logo desk -->
 <g fill="none" stroke="#fff" stroke-width="1">
  <rect x="15.5" y="13.5" width="9.5" height="6"/>
  <path d="M19 19.5v3M22 19.5v3"/>
  <rect x="13.5" y="22.5" width="23.5" height="2.5"/>
  <path d="M13.500 25V36.500H16.500V25"/>
  <rect x="26.500" y="25" width="10.500" height="11.500"/>
  <path d="M26.500 30.500H37M30 28h3.500M30 33.500h3.500"/>
 </g>
 <!-- home -->
 <g fill="#fff">
  <rect x="251.300" y="14" width="4.800" height="7"/>
  <path d="M245.100 15.300L260 24.200V27.200L245.100 18.600L230.200 27.200V24.200Z"/>
  <path d="M245.100 20.200L256.100 26.600V38H248.400V30.300a3.200 3.200 0 0 0-6.600 0V38H234V26.600Z"/>
 </g>
 <!-- grid + pencil (on light tab) -->
 <g fill="#1a2e3d">
  <rect x="279.500" y="13" width="6.300" height="4.800"/><rect x="287.800" y="13" width="6.300" height="4.800"/><rect x="296" y="13" width="6.300" height="4.800"/>
  <rect x="279.500" y="19.800" width="6.300" height="4.800"/><rect x="287.800" y="19.800" width="6.300" height="4.800"/><rect x="296" y="19.800" width="6.300" height="4.800"/>
  <rect x="279.500" y="26.300" width="6.300" height="4.800"/><rect x="287.800" y="26.300" width="6.300" height="4.800"/><rect x="296" y="26.300" width="6.300" height="4.800"/>
  <rect x="279.500" y="32.800" width="6.300" height="4.600"/><rect x="287.800" y="32.800" width="6.300" height="4.600"/><rect x="296" y="32.800" width="6.300" height="4.600"/>
  <path d="M288.800 38.200L290.600 31.600L303.400 18.800Q305.600 17.300 307.400 19.400Q309 21.300 307.500 23L294.800 35.700Z" stroke="#f8f8fa" stroke-width="2.200" stroke-linejoin="round"/>
  <path d="M302.300 20.200L306 24" stroke="#f8f8fa" stroke-width="0.900"/>
 </g>
 <!-- database with arrow -->
 <g>
  <path d="M333 14.500C333 8.700 353.100 8.700 353.100 14.500V35.500C353.100 41 333 41 333 35.500Z" fill="#fff"/>
  <path d="M333 21.500C337 25.600 349 25.600 353.100 21.500M333 29.800C337 33.800 349 33.800 353.100 29.800" fill="none" stroke="#1a2e3d" stroke-width="1.300"/>
  <path d="M329 13.300C336 12 340.500 15 341.800 17.600L344 13L346.600 27.300L332.500 24L336.800 21.400C335.300 18.700 333 17.300 329.500 17.200Z" fill="#fff" stroke="#1a2e3d" stroke-width="1.100" stroke-linejoin="round"/>
 </g>
 <!-- circle with arrows -->
 <g>
  <circle cx="391" cy="25" r="13.900" fill="none" stroke="#fff" stroke-width="1.400"/>
  <path d="M391 10.400A14.600 14.600 0 0 0 391 39.600Z" fill="#fff"/>
  <path d="M380.200 25L387.800 19V22.700H391.200V27.300H387.800V31Z" fill="#1a2e3d"/>
  <path d="M402.100 25L394.100 19V22.700H391V27.300H394.100V31Z" fill="#fff"/>
 </g>
 <!-- windows -->
 <g>
  <rect x="429.200" y="10.100" width="24.800" height="22" rx="2" fill="#fff"/>
  <rect x="432" y="15.800" width="19.300" height="13.700" fill="#1a2e3d"/>
  <rect x="423.300" y="16.700" width="26.700" height="24" rx="2.500" fill="#1a2e3d"/>
  <rect x="424.300" y="17.700" width="24.700" height="22" rx="2" fill="#fff"/>
  <rect x="427" y="23" width="19.300" height="14" fill="#1a2e3d"/>
  <g fill="#1a2e3d"><circle cx="444.300" cy="13" r="0.900"/><circle cx="447.500" cy="13" r="0.900"/><circle cx="450.700" cy="13" r="0.900"/>
  <circle cx="439.500" cy="20.300" r="0.900"/><circle cx="442.700" cy="20.300" r="0.900"/><circle cx="445.900" cy="20.300" r="0.900"/></g>
  <g fill="#fff"><rect x="428.500" y="24.300" width="8.200" height="1.600"/><rect x="428.500" y="27.500" width="8.200" height="1.600"/><rect x="428.500" y="30.700" width="8.200" height="1.600"/><rect x="428.500" y="33.900" width="8.200" height="1.600"/>
  <rect x="438" y="24.200" width="7" height="11.300"/></g>
 </g>
 <!-- gear -->
 <g transform="translate(487.200 25)">
  <g fill="#fff">
   <circle r="10.600"/>
   <g id="tooth"><path d="M-2.700 -9L-1.900 -14.500H1.900L2.700 -9Z"/></g>
   <use href="#tooth" transform="rotate(36)"/><use href="#tooth" transform="rotate(72)"/><use href="#tooth" transform="rotate(108)"/><use href="#tooth" transform="rotate(144)"/><use href="#tooth" transform="rotate(180)"/><use href="#tooth" transform="rotate(216)"/><use href="#tooth" transform="rotate(252)"/><use href="#tooth" transform="rotate(288)"/><use href="#tooth" transform="rotate(324)"/>
  </g>
  <circle r="4.900" fill="#1a2e3d"/>
 </g>
 <!-- floppy -->
 <g>
  <path d="M537 12.700H556.700L560.500 16.800V36.500A1.500 1.500 0 0 1 559 38H537A1.500 1.500 0 0 1 535.500 36.500V14.200A1.500 1.500 0 0 1 537 12.700Z" fill="#fff"/>
  <rect x="542" y="14" width="12" height="9" rx="0.800" fill="#1a2e3d"/>
  <rect x="549.700" y="15" width="3.500" height="7" fill="#fff"/>
  <rect x="540.700" y="27.300" width="14.600" height="9.200" rx="0.800" fill="#1a2e3d"/>
 </g>
 <!-- back / forward (disabled) -->
 <circle cx="598" cy="25.500" r="14.500" fill="#52636f"/>
 <path d="M588.300 25.500L600 17.700V22.300H606V28.700H600V33.300Z" fill="#1a2e3d"/>
 <circle cx="648.300" cy="25.500" r="14.500" fill="#52636f"/>
 <path d="M658 25.500L646.300 17.700V22.300H640.300V28.700H646.300V33.300Z" fill="#1a2e3d"/>
 <!-- open lock (disabled) -->
 <g>
  <rect x="686" y="24" width="24.100" height="15.200" fill="#52636f"/>
  <path d="M704.800 24.500V19.400A6.500 6.500 0 0 0 692.100 17.600" fill="none" stroke="#52636f" stroke-width="3.600"/>
  <circle cx="698" cy="28.700" r="2.300" fill="#1a2e3d"/><rect x="697" y="29" width="2" height="7" fill="#1a2e3d"/>
 </g>
 <!-- lock with x -->
 <g>
  <rect x="736" y="24" width="24.200" height="15.300" fill="#fff"/>
  <path d="M741.100 24.500V19.700A6.900 6.900 0 0 1 754.900 19.700V24.500" fill="none" stroke="#fff" stroke-width="3.800"/>
  <path d="M743.500 28L752.500 37M752.500 28L743.500 37" stroke="#1a2e3d" stroke-width="2.600"/>
 </g>
 <!-- flow + search -->
 <g fill="#fff">
  <rect x="793.200" y="11" width="8" height="7"/><rect x="795.800" y="18" width="2.800" height="3"/>
  <rect x="793.200" y="21" width="8" height="6.600"/><rect x="795.800" y="27" width="2.800" height="6"/>
  <rect x="787.200" y="29.600" width="11" height="1.500"/><rect x="787.200" y="30" width="1.500" height="3"/>
  <rect x="783.500" y="33" width="8.500" height="6.600"/><rect x="793.500" y="33" width="8.500" height="6.600"/>
  <circle cx="804.200" cy="32.300" r="6.700" fill="#1a2e3d"/>
  <circle cx="804.200" cy="32.300" r="4.800" fill="#1a2e3d" stroke="#fff" stroke-width="1.700"/>
  <path d="M808 36.300L812.700 40.300" stroke="#fff" stroke-width="2.200" stroke-linecap="round"/>
 </g>
 <!-- user with x badge -->
 <g>
  <ellipse cx="1331.100" cy="21.200" rx="6.300" ry="8.600" fill="#fff"/>
  <path d="M1319.800 39.800C1319.800 33 1323 31.800 1328 30H1334.500C1338 31.500 1340 33 1340 39.800Z" fill="#fff"/>
  <path d="M1327.500 29.500L1331 33.500L1334.600 29.500" fill="none" stroke="#1a2e3d" stroke-width="0.900"/>
  <circle cx="1339.700" cy="33.600" r="7.600" fill="#1a2e3d"/>
  <circle cx="1339.700" cy="33.600" r="6.600" fill="#fff"/>
  <path d="M1336.700 30.600L1342.700 36.600M1342.700 30.600L1336.700 36.600" stroke="#1a2e3d" stroke-width="2"/>
 </g>
 <!-- window controls -->
 <rect x="1368" y="33.800" width="7.500" height="2.200" fill="#dcdcdc"/>
 <path d="M1388.200 29.200H1396.700V35.500H1388.200Z" fill="none" stroke="#dcdcdc" stroke-width="1"/>
 <rect x="1387.700" y="28.700" width="9.500" height="2.500" fill="#dcdcdc"/>
 <path d="M1410 29L1417 36M1417 29L1410 36" stroke="#dcdcdc" stroke-width="1.100"/>
</svg>

<!-- text layer -->
<div class="t" style="left:49.50px;top:28.00px;font-size:23.5px;font-weight:200;color:#f2f4f6;font-family:'DejaVu Sans Light','DejaVu Sans',sans-serif;letter-spacing:0.709px;-webkit-text-stroke:0.25px #f2f4f6;">Factory</div>
<div class="t" style="left:142.50px;top:28.00px;font-size:23.5px;color:#fff;font-family:'DejaVu Sans',sans-serif;letter-spacing:1.170px;">Logix</div>
<div class="t" style="left:210.50px;top:20.00px;font-size:5.5px;color:#9fb0bc;">™</div>
<div class="t" style="left:849.30px;top:8.00px;font-size:10.6px;font-weight:bold;color:#fff;letter-spacing:-0.162px;">Assembly:</div>
<div class="t" style="left:849.30px;top:24.00px;font-size:10.6px;font-weight:bold;color:#fff;letter-spacing:-0.349px;">Process Rev:</div>
<div class="t" style="left:849.30px;top:38.00px;font-size:10.6px;font-weight:bold;color:#fff;letter-spacing:-0.200px;">Release Status:</div>
<div class="t" style="left:930.00px;top:8.00px;font-size:10.6px;color:#fff;letter-spacing:0.092px;">10-210456 - 1.0</div>
<div class="t" style="left:930.00px;top:24.00px;font-size:10.6px;color:#fff;letter-spacing:-0.797px;">12</div>
<div class="t" style="left:929.80px;top:38.00px;font-size:10.6px;color:#fff;letter-spacing:0.178px;">Under Construction</div>
<div class="t" style="left:20.80px;top:74.50px;font-size:15px;color:#3c3c3c;letter-spacing:-0.152px;">Process Definition</div>
<div class="t" style="left:57.40px;top:138.50px;font-size:13.5px;color:#111;letter-spacing:0.015px;-webkit-text-stroke:0.55px #111;">Process Flow</div>
<div class="t" style="left:57.70px;top:188.50px;font-size:13.5px;color:#111;letter-spacing:0.498px;-webkit-text-stroke:0.55px #111;">Editing - Auto Placement</div>
<div class="t" style="left:48.20px;top:281.00px;font-size:12px;letter-spacing:-0.049px;">All steps can be viewed in any order</div>
<div class="t" style="left:33.00px;top:315.00px;font-size:12px;color:#111;letter-spacing:-0.225px;">Step List</div>
<div class="t" style="left:37.50px;top:372.00px;font-size:14px;color:#111;letter-spacing:-0.232px;">Standard Step #2</div>
<div class="t" style="left:53.20px;top:403.00px;font-size:12px;font-weight:bold;color:#000;letter-spacing:-0.018px;">Numeric Data Collection Activity #1</div>
<div class="t" style="left:28.00px;top:906.00px;font-size:12px;color:#0000ee;letter-spacing:0.247px;text-decoration:underline;">Import Log</div>
<div class="t" style="left:359.70px;top:77.00px;font-size:12px;letter-spacing:-0.018px;">Document Tools</div>
<div class="t" style="left:366.70px;top:147.00px;font-size:12px;letter-spacing:-0.058px;">New</div>
<div class="t" style="left:412.00px;top:147.00px;font-size:12px;letter-spacing:-0.367px;">From</div>
<div class="t" style="left:401.00px;top:161.00px;font-size:12px;letter-spacing:-0.015px;">Template</div>
<div class="t" style="left:459.00px;top:147.00px;font-size:12px;letter-spacing:-0.467px;">From</div>
<div class="t" style="left:465.50px;top:161.00px;font-size:12px;letter-spacing:-0.588px;">V7</div>
<div class="t" style="left:363.20px;top:180.00px;font-size:12px;letter-spacing:-0.019px;">Create Work Instruction</div>
<div class="t" style="left:500.60px;top:147.00px;font-size:12px;letter-spacing:0.096px;">Import From</div>
<div class="t" style="left:506.60px;top:161.00px;font-size:12px;letter-spacing:0.042px;">Document</div>
<div class="t" style="left:583.70px;top:147.00px;font-size:12px;letter-spacing:-0.252px;">Link To</div>
<div class="t" style="left:574.50px;top:161.00px;font-size:12px;letter-spacing:0.057px;">Document</div>
<div class="t" style="left:655.30px;top:113.00px;font-size:12px;letter-spacing:-0.120px;">From Library</div>
<div class="t" style="left:655.30px;top:136.00px;font-size:12px;letter-spacing:-0.262px;">From Any Process</div>
<div class="t" style="left:655.30px;top:159.00px;font-size:12px;letter-spacing:-0.506px;">From URL</div>
<div class="t" style="left:592.00px;top:180.00px;font-size:12px;letter-spacing:-0.052px;">Add Element</div>
<div class="t" style="left:762.50px;top:147.00px;font-size:12px;letter-spacing:-0.177px;">Delete</div>
<div class="t" style="left:803.70px;top:147.00px;font-size:12px;letter-spacing:-0.231px;">Mark as</div>
<div class="t" style="left:804.00px;top:161.00px;font-size:12px;letter-spacing:-0.191px;">Primary</div>
<div class="t" style="left:771.30px;top:180.00px;font-size:12px;letter-spacing:-0.159px;">Edit Element</div>
<div class="t" style="left:1214.40px;top:133.00px;font-size:12px;color:#111;letter-spacing:0.031px;">Circuit</div>
<div class="t" style="left:1214.40px;top:149.00px;font-size:12px;color:#111;letter-spacing:0.261px;">Mapping</div>
<div class="t" style="left:1279.30px;top:133.00px;font-size:12px;color:#111;letter-spacing:0.045px;">Material</div>
<div class="t" style="left:1279.30px;top:149.00px;font-size:12px;color:#111;letter-spacing:-0.265px;">Setup</div>
<div class="t" style="left:1339.60px;top:133.00px;font-size:12px;color:#111;letter-spacing:-0.092px;">Entry / Exit</div>
<div class="t" style="left:388.60px;top:281.00px;font-size:18px;color:#3a3a3a;letter-spacing:-0.892px;">Settings</div>
<div class="t" style="left:395.20px;top:310.00px;font-size:12px;font-weight:bold;color:#222;letter-spacing:-0.020px;">Instruction</div>
<div class="t" style="left:480.20px;top:310.00px;font-size:12px;letter-spacing:0.025px;">Activity Details</div>
<div class="t" style="left:576.30px;top:310.00px;font-size:12px;letter-spacing:-0.152px;">Part Assignments</div>
<div class="t" style="left:413.60px;top:344.00px;font-size:12px;letter-spacing:-0.116px;">Is Activity Required?</div>
<div class="t" style="left:389.60px;top:366.50px;font-size:17px;color:#3c3c3c;letter-spacing:0.045px;">Collect a Number</div>
<div class="t" style="left:389.60px;top:398.00px;font-size:12px;font-weight:bold;color:#222;letter-spacing:-0.017px;">Header</div>
<div class="t" style="left:506.30px;top:398.00px;font-size:12px;letter-spacing:0.023px;">Numeric Collection</div>
<div class="t" style="left:389.60px;top:437.50px;font-size:13px;letter-spacing:0.145px;">Format of Numbers</div>
<div class="t" style="left:389.60px;top:467.00px;font-size:12px;letter-spacing:-0.070px;">Unit of Measure:</div>
<div class="t" style="left:506.30px;top:467.00px;font-size:12px;letter-spacing:0.019px;">Length</div>
<div class="t" style="left:389.60px;top:493.00px;font-size:12px;letter-spacing:0.003px;">Unit:</div>
<div class="t" style="left:506.30px;top:493.00px;font-size:12px;letter-spacing:0.295px;">Millimeter</div>
<div class="t" style="left:389.60px;top:519.00px;font-size:12px;letter-spacing:-0.177px;">Precision [Decimals]:</div>
<div class="t" style="left:813.80px;top:519.00px;font-size:12px;">0</div>
<div class="t" style="left:878.40px;top:364.50px;font-size:15px;color:#3c3c3c;letter-spacing:0.030px;">Limit the Input Range</div>
<div class="t" style="left:897.00px;top:395.00px;font-size:12px;letter-spacing:0.083px;">No Limit</div>
<div class="t" style="left:897.00px;top:426.00px;font-size:12px;letter-spacing:-0.243px;">Limit Range</div>
<div class="t" style="left:897.00px;top:457.00px;font-size:12px;letter-spacing:0.032px;">Limit Batch Attributes</div>
<div class="t" style="left:1094.50px;top:426.00px;font-size:12px;letter-spacing:-0.124px;">Min Value:</div>
<div class="t" style="left:1215.70px;top:426.00px;font-size:12px;letter-spacing:-0.293px;">Max Value:</div>
<div class="t" style="left:1181.80px;top:426.00px;font-size:12px;color:#b2b2b2;">0</div>
<div class="t" style="left:1303.00px;top:426.00px;font-size:12px;color:#b2b2b2;">3</div>
<div class="t" style="left:1094.50px;top:457.00px;font-size:12px;letter-spacing:-0.124px;">Min Value:</div>
<div class="t" style="left:1215.70px;top:457.00px;font-size:12px;letter-spacing:-0.293px;">Max Value:</div>
<div class="t" style="left:1157.20px;top:457.00px;font-size:12px;color:#b2b2b2;letter-spacing:-0.572px;">Sele...</div>
<div class="t" style="left:1280.00px;top:457.00px;font-size:12px;color:#b2b2b2;letter-spacing:-0.612px;">Sel...</div>
<div class="t" style="left:878.40px;top:506.50px;font-size:15px;color:#3c3c3c;letter-spacing:0.081px;">Validate the Information</div>
<div class="t" style="left:896.40px;top:537.00px;font-size:12px;letter-spacing:0.100px;">No Validation</div>
<div class="t" style="left:896.40px;top:568.00px;font-size:12px;letter-spacing:-0.124px;">Validate Value</div>
<div class="t" style="left:1094.50px;top:568.00px;font-size:12px;letter-spacing:-0.124px;">Min Value:</div>
<div class="t" style="left:1215.70px;top:568.00px;font-size:12px;letter-spacing:-0.293px;">Max Value:</div>
<div class="t" style="left:1181.80px;top:568.00px;font-size:12px;color:#b2b2b2;">0</div>
<div class="t" style="left:1302.60px;top:568.00px;font-size:12px;color:#b2b2b2;">0</div>
<div class="t" style="left:896.40px;top:604.00px;font-size:12px;letter-spacing:-0.015px;">Validate Value with Control Limits</div>
<div class="t" style="left:1094.50px;top:604.00px;font-size:12px;letter-spacing:-0.053px;">Lower Limit:</div>
<div class="t" style="left:1215.70px;top:604.00px;font-size:12px;letter-spacing:-0.026px;">Upper Limit:</div>
<div class="t" style="left:1181.80px;top:604.00px;font-size:12px;color:#cfcfcf;">0</div>
<div class="t" style="left:1302.40px;top:604.00px;font-size:12px;color:#cfcfcf;">0</div>
<div class="t" style="left:1093.50px;top:640.00px;font-size:12px;letter-spacing:-0.165px;">Status Comment:</div>
<div class="t" style="left:896.40px;top:673.00px;font-size:12px;letter-spacing:0.006px;">Validate Batch Attributes</div>
<div class="t" style="left:1094.50px;top:673.00px;font-size:12px;letter-spacing:-0.124px;">Min Value:</div>
<div class="t" style="left:1215.70px;top:673.00px;font-size:12px;letter-spacing:-0.293px;">Max Value:</div>
<div class="t" style="left:1157.20px;top:673.00px;font-size:12px;color:#b2b2b2;letter-spacing:-0.572px;">Sele...</div>
<div class="t" style="left:1280.00px;top:673.00px;font-size:12px;color:#b2b2b2;letter-spacing:-0.612px;">Sel...</div>
<div class="t" style="left:878.40px;top:717.50px;font-size:13px;letter-spacing:-0.004px;">Instructions for Failed Validation</div>
<div class="t" style="left:878.40px;top:747.00px;font-size:12px;letter-spacing:0.108px;">Action</div>
<div class="t" style="left:878.40px;top:773.00px;font-size:12px;letter-spacing:-0.335px;">Re-Route Pathway</div>
<div class="t" style="left:1099.30px;top:747.00px;font-size:12px;letter-spacing:-0.179px;">Force Valid Entry</div>
<div class="t" style="left:1111.20px;top:799.00px;font-size:12px;color:#b4b4b4;letter-spacing:-0.095px;">Create Symptom on Failed Measurement</div>
<div class="t" style="left:1316.50px;top:854.00px;font-size:12px;letter-spacing:-0.244px;">OK</div>
</div>
</body></html>
